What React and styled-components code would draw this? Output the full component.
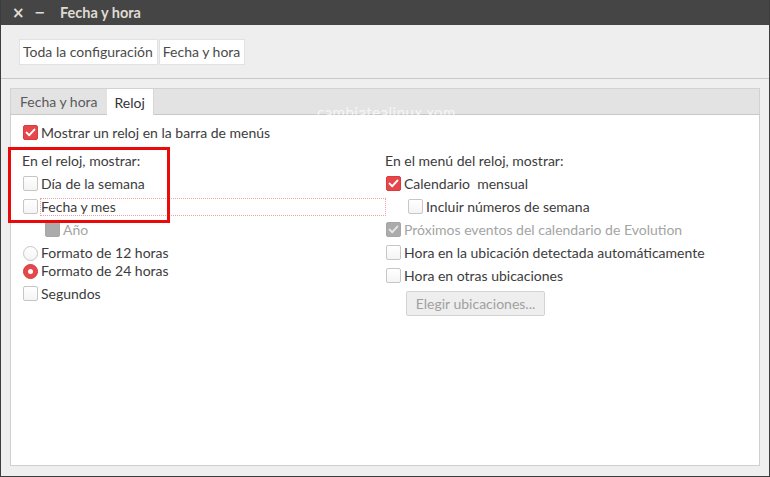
import React from "react";
import styled, { createGlobalStyle } from "styled-components";

const GlobalStyle = createGlobalStyle`
  html, body {
    margin: 0;
    padding: 0;
    background: #efefef;
  }
  body {
    font-family: Lato, "Noto Sans", sans-serif;
    font-size: 14px;
    color: #3c3c3c;
  }
`;

const Window = styled.div`
  position: relative;
  width: 770px;
  height: 477px;
  box-sizing: border-box;
  display: flex;
  flex-direction: column;
  background: #efefef;
  border-left: 1px solid #3d3d3d;
  border-right: 1px solid #3d3d3d;
  border-bottom: 1px solid #3d3d3d;
  overflow: hidden;
`;

const TitleBar = styled.div`
  height: 25px;
  flex: none;
  display: flex;
  align-items: center;
  background: #454545;
  color: #dfdbd2;
  padding-left: 11px;
`;

const TitleButton = styled.span`
  width: 12px;
  margin-right: 10px;
  text-align: center;
  font-family: "DejaVu Sans", sans-serif;
  font-size: ${p => (p.$big ? "15px" : "13px")};
  font-weight: bold;
  color: #e0ddd6;
`;

const Title = styled.span`
  margin-left: 4px;
  font-weight: bold;
  font-size: 14.5px;
  color: #dfdbd2;
`;

const Header = styled.div`
  height: 53px;
  flex: none;
  display: flex;
  align-items: center;
  padding-left: 18px;
  background: #eeeeee;
  border-bottom: 1px solid #c9c9c9;
`;

const Crumb = styled.div`
  height: 24px;
  display: flex;
  align-items: center;
  padding: 0 4px 0 3px;
  background: #ffffff;
  border: 1px solid #e2e2e2;
  margin-right: 1px;
  font-size: 14px;
  color: #4a4a4a;
`;

const Body = styled.div`
  flex: 1;
  display: flex;
  flex-direction: column;
  padding: 9px 9px 10px 9px;
`;

const TabStrip = styled.div`
  height: 25px;
  flex: none;
  display: flex;
  background: #e3e3e3;
  border: 1px solid #d2d2d2;
  border-bottom: 1px solid #c8c8c8;
`;

const Tab = styled.div`
  display: flex;
  align-items: center;
  padding: 0 ${p => (p.$active ? "8px" : "9px")};
  background: ${p => (p.$active ? "#ffffff" : "transparent")};
  color: ${p => (p.$active ? "#333333" : "#5a5a5a")};
  border-right: ${p => (p.$active ? "1px solid #d6d6d6" : "none")};
  margin-bottom: ${p => (p.$active ? "-1px" : "0")};
`;

const Page = styled.div`
  flex: 1;
  background: #ffffff;
  border: 1px solid #cfcfcf;
  border-top: none;
  padding: 6px 11px 0 11px;
`;

const Columns = styled.div`
  display: grid;
  grid-template-columns: 363px 1fr;
  margin-top: 5px;
`;

const Column = styled.div`
  display: flex;
  flex-direction: column;
`;

const Row = styled.div`
  height: ${p => (p.$short ? "18px" : "23px")};
  display: flex;
  align-items: center;
  padding-left: ${p => p.$indent || 0}px;
  margin-top: ${p => p.$gap || 0}px;
  color: ${p => (p.$disabled ? "#a4a4a4" : "#3c3c3c")};
  white-space: pre;
`;

const Heading = styled(Row)`
  padding-left: 0;
`;

const Label = styled.span`
  margin-left: 3px;
  line-height: 16px;
  ${p =>
    p.$focus &&
    `
    flex: 1;
    outline: 1px dotted #f0a0a0;
    outline-offset: 0;
  `}
`;

const Box = styled.span`
  width: 15px;
  height: 15px;
  margin-left: 1px;
  box-sizing: border-box;
  flex: none;
  display: flex;
  align-items: center;
  justify-content: center;
  border-radius: 2px;
  border: 1px solid ${p => (p.$state === "on" ? "#d93b3f" : p.$state === "dim" ? "#a6a6a6" : "#c6c6c6")};
  background: ${p =>
    p.$state === "on" ? "#e6474a" : p.$state === "dim" ? "#ababab" : "linear-gradient(#ffffff, #f4f4f4)"};
`;

const Radio = styled(Box)`
  border-radius: 50%;
  border-color: ${p => (p.$state === "on" ? "#d93b3f" : "#c6c6c6")};
`;

const Dot = styled.span`
  width: 5px;
  height: 5px;
  border-radius: 50%;
  background: #ffffff;
`;

const Button = styled.div`
  width: 139px;
  height: 25px;
  box-sizing: border-box;
  margin: 4px 0 0 21px;
  display: flex;
  align-items: center;
  justify-content: center;
  background: #eeeeee;
  border: 1px solid #d3d3d3;
  border-radius: 2px;
  color: #a0a0a0;
`;

const Highlight = styled.div`
  position: absolute;
  left: 7px;
  top: 147px;
  width: 162px;
  height: 76px;
  box-sizing: border-box;
  border: 3px solid #ea0a0a;
  pointer-events: none;
`;

const Watermark = styled.div`
  position: absolute;
  left: 316px;
  top: 103px;
  font-size: 15px;
  letter-spacing: 0.5px;
  color: rgba(255, 255, 255, 0.7);
  pointer-events: none;
`;

const Check = ({ color = "#ffffff" }) => (
  <svg width="11" height="11" viewBox="0 0 11 11">
    <path d="M1.6 5.6 L4.3 8.2 L9.4 2.6" fill="none" stroke={color} strokeWidth="2" strokeLinecap="round" strokeLinejoin="round" />
  </svg>
);

const CheckRow = ({ state, label, indent, disabled, focus }) => (
  <Row $indent={indent} $disabled={disabled}>
    <Box $state={state}>{state === "on" && <Check />}</Box>
    <Label $focus={focus}>{label}</Label>
  </Row>
);

const RadioRow = ({ on, label, gap }) => (
  <Row $short $gap={gap}>
    <Radio $state={on ? "on" : "off"}>{on && <Dot />}</Radio>
    <Label>{label}</Label>
  </Row>
);

export default function App() {
  return (
    <>
      <GlobalStyle />
      <Window>
        <TitleBar>
          <TitleButton $big>×</TitleButton>
          <TitleButton>−</TitleButton>
          <Title>Fecha y hora</Title>
        </TitleBar>
        <Header>
          <Crumb>Toda la configuración</Crumb>
          <Crumb>Fecha y hora</Crumb>
        </Header>
        <Body>
          <TabStrip>
            <Tab>Fecha y hora</Tab>
            <Tab $active>Reloj</Tab>
          </TabStrip>
          <Page>
            <CheckRow state="on" label="Mostrar un reloj en la barra de menús" />
            <Columns>
              <Column>
                <Heading>En el reloj, mostrar:</Heading>
                <CheckRow state="off" label="Día de la semana" />
                <CheckRow state="off" label="Fecha y mes" focus />
                <Row $indent={22} $disabled>
                  <Box $state="dim" />
                  <Label>Año</Label>
                </Row>
                <RadioRow label="Formato de 12 horas" gap={3} />
                <RadioRow on label="Formato de 24 horas" />
                <Row $gap={2}>
                  <Box $state="off" />
                  <Label>Segundos</Label>
                </Row>
              </Column>
              <Column>
                <Heading>En el menú del reloj, mostrar:</Heading>
                <CheckRow state="on" label="Calendario  mensual" />
                <CheckRow state="off" indent={22} label="Incluir números de semana" />
                <Row $disabled>
                  <Box $state="dim">
                    <Check color="#e6e6e6" />
                  </Box>
                  <Label>Próximos eventos del calendario de Evolution</Label>
                </Row>
                <CheckRow state="off" label="Hora en la ubicación detectada automáticamente" />
                <CheckRow state="off" label="Hora en otras ubicaciones" />
                <Button>Elegir ubicaciones...</Button>
              </Column>
            </Columns>
          </Page>
        </Body>
        <Highlight />
        <Watermark>cambiatealinux.xom</Watermark>
      </Window>
    </>
  );
}
